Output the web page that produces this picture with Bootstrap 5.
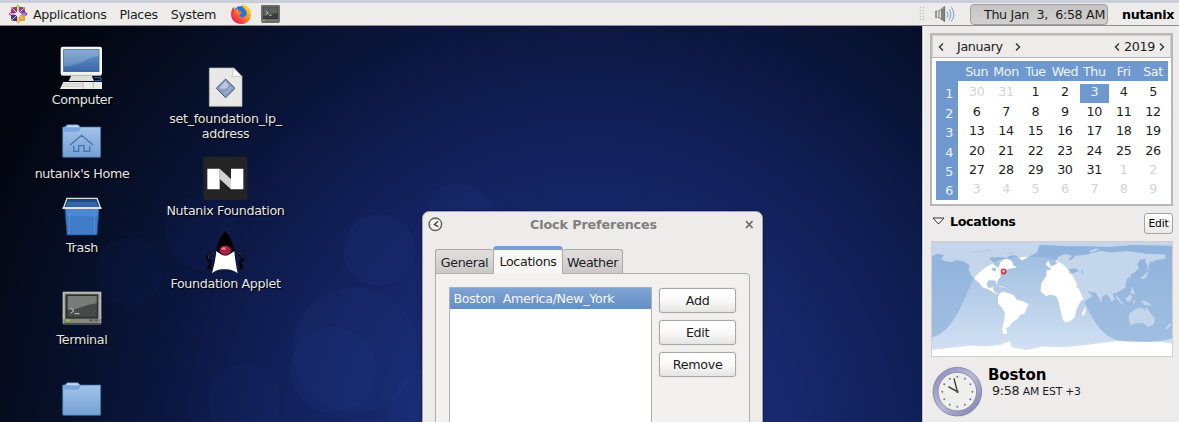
<!DOCTYPE html>
<html lang="en">
<head>
<meta charset="utf-8">
<title>Desktop</title>
<link href="https://cdn.jsdelivr.net/npm/bootstrap@5.3.0/dist/css/bootstrap.min.css" rel="stylesheet">
<style>
html,body{height:422px;overflow:hidden}
body{font-family:"DejaVu Sans",sans-serif;font-size:12.7px;letter-spacing:-.34px;line-height:15px;color:#1c1c1c;background:#edeceb}
.topbar{height:26px;border-top:3px solid #c9ced8;border-bottom:1px solid #8f8f8f;background:#edeceb;padding-left:8px;white-space:pre}
.topbar svg{display:block;flex:none}
.menus{gap:13px;margin:0 15px 0 5px}
.launchers{gap:10px}
.grip{width:6px;height:16px;background:radial-gradient(circle,#bdbdbb .5px,transparent 1.1px) 0 0/3px 3px;margin-right:10px}
.clockbtn{width:138px;height:21px;border:1px solid #a09e9c;border-radius:4px;background:linear-gradient(#c5c4c2,#d2d1cf);padding:1px 2px 0 0;margin-left:15px}
.username{width:71px;padding-right:5px}
.desk{height:396px}
.canvas{width:922px;background:radial-gradient(circle at 590px 420px,#192c77 0,#182a72 170px,#122059 320px,#0b163f 430px,#071029 530px,#03060f 660px)}
.wall{left:0;top:0}
.shortcut{color:#e6e6e6;text-shadow:1px 1px 1px #000;width:130px;white-space:nowrap}
.shortcut svg{display:block;overflow:visible}
.c1{left:17px}.c2{left:160.5px}
.y1{top:14px}.y2{top:94px}.y3{top:168px}.y4{top:261px}.y5{top:352px}
.z1{top:39px}.z2{top:130px}.z3{top:203px}
.y1 span{margin-top:2px}.y2 span{margin-top:1px}.y3 span,.y4 span,.z2 span{margin-top:1px}
.dlg{left:422px;top:185px;width:341px;height:230px;background:#edeceb;border:1px solid #a5a4a2;border-radius:7px 7px 0 0;box-shadow:0 0 2px #0a1030}
.dlgtitle{height:25px;padding:0 7px 0 5px;color:#807f7d;font-weight:bold;letter-spacing:-.1px;margin-bottom:9px}
.tabs{padding-left:12px;height:28px}
.tabx{height:25px;background:linear-gradient(#e2e1df,#c9c8c6);border:1px solid #a9a8a6;border-bottom-color:#b1b0ae;border-radius:3px 3px 0 0;padding-top:2px}
.t1{width:58px;border-right:0}.t3{width:60px;border-left:0}
.tabon{width:70px;height:28px;background:#f7f6f5;border:1px solid #aaa;border-top:4px solid #789fd0;border-bottom:0;z-index:1;border-radius:4px 4px 0 0;padding-bottom:2px}
.page{margin:-1px 12px 0;height:170px;background:#f2f1f0;border:1px solid #b0afad;border-radius:0 4px 0 0;padding:14px 13px 0 12.5px;gap:7px}
.loclist{width:204px;margin-top:-1px;border:1px solid #b3b0ac;background:#fff}
.locrow{height:21px;background:linear-gradient(#7fa4d5,#648ec6);color:#f4f7fb;padding:0 4px;white-space:pre}
.btns{gap:7px;width:77px}
.gbtn{height:25px;border:1px solid #a9a8a6;border-radius:3px;background:linear-gradient(#fff,#f9f9f9 50%,#e5e4e3);box-shadow:0 0 1px #aaa;color:#1c1c1c;font-size:12.7px;letter-spacing:-.3px;padding:0}
.side{width:257px;background:#edeceb;border-left:1px solid #bdbdbf;padding:7px 6px 0 7px;box-shadow:inset 1px 0 #f7f7f7}
.cal{height:173px;border:2px solid #b9b7b5;background:#fff}
.calhead{height:23px;background:#edeceb;border:1px solid #d0cecc;border-bottom:1px solid #b7b5b3;padding:0 5px}
.mname{margin:0 12px 0 13px}
.calgrid{margin:3px 3px 0 4px;display:grid;grid-template-columns:22px 4px repeat(7,29.4px);grid-template-rows:20px 2.5px repeat(6,19.45px)}
.calgrid>*{display:flex;align-items:center;justify-content:center}
.dow{background:#6f99ce;color:#eef3fa;font-size:12.6px}
.rule{grid-column:2/-1}
.wk{background:#6f99ce;color:#eef3fa;padding:1px 0 0 4px}
.day{padding-bottom:3px}
.sel{background:#6f99ce;color:#eef3fa}
.off{color:#d2d2d2}
.mini{width:29px;height:21px;border:1px solid #a6a5a3;border-radius:3px;background:linear-gradient(#fff,#ebeae9);font-size:10.7px;letter-spacing:-.15px;padding:0}
.lochead{margin-top:7px;height:21px;padding-left:2px}
.loctitle{gap:5px;margin-bottom:5px}
.mapbox{width:242px;height:116px;border:1px solid #cfcecc;margin:7px 0 9px 1px}
.face{margin-left:2px}
.cityinfo{margin:1px 0 0 5px}
.city{font-size:15px;letter-spacing:-.1px;line-height:16px}
.ctime{margin-left:4px}
.tz{font-size:10.8px;letter-spacing:-.2px}
</style>
</head>
<body>
<header class="topbar d-flex align-items-center">
<svg width="20" height="20" viewBox="0 0 60 60">
<path d="M30 1l7 8v11H23V9z" fill="#9ccd2a"/><path d="M30 59l-7-8V40h14v11z" fill="#f0ad2e"/><path d="M1 30l8-7h11v14H9z" fill="#b463aa"/><path d="M59 30l-8 7H40V23h11z" fill="#5a3f8f"/>
<path d="M9 9h18v18H9z" fill="#a1308c"/><path d="M33 9h18v18H33z" fill="#8a3e95"/><path d="M9 33h18v18H9z" fill="#433083"/><path d="M33 33h18v18H33z" fill="#eba22c"/>
<path d="M30 6v48M6 30h48M14 14l32 32M46 14L14 46" stroke="#f3f0f0" stroke-width="2.5"/><path d="M9 9l8 1-7 7zM51 9l-8 1 7 7z" fill="#e9a33a"/><path d="M9 51l1-8 7 7zM51 51l-1-8-7 7z" fill="#9ccd2a"/>
</svg>
<div class="menus d-flex"><span>Applications</span><span>Places</span><span>System</span></div>
<div class="launchers d-flex align-items-center">
<svg width="20" height="20" viewBox="0 0 60 60"><defs><linearGradient id="ff" x1=".9" y1=".1" x2=".2" y2=".9"><stop stop-color="#ffe13b"/><stop offset=".45" stop-color="#ff9019"/><stop offset="1" stop-color="#ee1863"/></linearGradient></defs><circle cx="30" cy="30" r="24" fill="#2872dc"/><path d="M32 1c14 0 27 11 28 28 1 18-12 31-29 31C13 60 0 48 0 31 0 22 4 14 8 8l1 9c5-3 9-4 13-2-1 8 5 9 11 9-3 5-8 6-7 11 5 7 15 6 20-2 6-12-10-18-14-32z" fill="url(#ff)"/><path d="M8 8l1 12-5 18c-5-10-2-22 4-30z" fill="#f02d4d"/></svg>
<svg width="19" height="18" viewBox="0 0 57 54"><rect x="1" y="1" width="55" height="49" rx="3" fill="#777b75" stroke="#454844" stroke-width="2"/><rect x="6" y="6" width="45" height="36" fill="#393e3c" stroke="#222"/><path d="M7 7h43v17L7 33z" fill="#5a615d"/><path d="M14 18l7 6-7 6M24 31h8" fill="none" stroke="#eee" stroke-width="2"/><path d="M6 46h6" stroke="#8d3" stroke-width="3"/><path d="M2 52h53" stroke="#555" stroke-width="3"/></svg></div>
<div class="ms-auto d-flex align-items-center"><span class="grip"></span>
<svg width="20" height="19" viewBox="0 0 60 57"><path d="M2 18h10L29 4v46L12 38H2z" fill="#a2a59f" stroke="#666963" stroke-width="2"/><path d="M8 18v20M16 17v22" stroke="#e7e7e4" stroke-width="3"/><path d="M21 13v30M27 7v41" stroke="#5d605b" stroke-width="3"/><path d="M36 20q6 9 0 18M42 13q11 15 0 31M49 7q15 21 0 42" fill="none" stroke="#7699c9" stroke-width="3"/></svg>
<div class="clockbtn d-flex align-items-center justify-content-end">Thu Jan  3,  6:58 AM</div><b class="username text-end text-black">nutanix</b></div>
</header>
<main class="desk d-flex">
<section class="canvas position-relative overflow-hidden flex-shrink-0">
<svg class="wall position-absolute" width="922" height="396" viewBox="0 26 922 396"><g fill="#294ba8" fill-opacity=".09"><circle cx="379" cy="250" r="36"/><circle cx="458" cy="219" r="36"/><circle cx="355" cy="350" r="63"/><circle cx="333" cy="370" r="43"/><circle cx="444" cy="420" r="57"/></g><g fill="#294ba8" fill-opacity=".06"><circle cx="244" cy="400" r="36"/><circle cx="202" cy="233" r="37"/><circle cx="130" cy="271" r="34"/></g></svg>
<div class="shortcut c1 y1 position-absolute d-flex flex-column align-items-center">
<svg width="46" height="50" viewBox="177 120 138 150"><defs><linearGradient id="scr" x1="0" y1="0" x2="0" y2="1"><stop stop-color="#6d97ca"/><stop offset="1" stop-color="#3767a8"/></linearGradient></defs><path d="M215 224h59l8 19h-76z" fill="#ddddd9"/><rect x="182" y="140" width="124" height="86" rx="6" fill="#f4f4f1"/><rect x="191" y="149" width="106" height="66" fill="url(#scr)" stroke="#31588e" stroke-width="2"/><path d="M192 150h104v18c-38 5-50 28-104 31z" fill="#fff" opacity=".19"/><path d="M184 226h120" stroke="#b7b8b2" stroke-width="3"/><path d="M190 246h116v21H180z" fill="#ecece8"/><path d="M188 252h60M186 259h60" stroke="#c8c8c3" stroke-width="3"/><path d="M249 245v22M280 246v20" stroke="#a5a59f" stroke-width="2"/><path d="M283 233h20v9h-19" fill="none" stroke="#3f72ad" stroke-width="3"/></svg><span>Computer</span></div>
<div class="shortcut c1 y2 position-absolute d-flex flex-column align-items-center">
<svg width="40" height="45" viewBox="0 0 120 135"><defs><linearGradient id="fo" x1="0" y1="0" x2="0" y2="1"><stop stop-color="#a6c6eb"/><stop offset="1" stop-color="#74a0d4"/></linearGradient></defs><path id="fold" d="M2 32V22L10 20l5-6h32l8 7h61v89q0 2-3 2H5q-3 0-3-3z" fill="url(#fo)" stroke="#3c6ba9" stroke-width="2"/><path d="M4 35h45l8-12-9-8H16l-6 7-6 2z" fill="#79a5dc"/><path d="M12 22l6-6h29l5 6z" fill="#c2d8f1"/><path d="M24 75l35-29 34 29M35 77v17h15V77h16v17h17V77" fill="none" stroke="#4574ae" stroke-width="4"/></svg><span>nutanix's Home</span></div>
<div class="shortcut c1 y3 position-absolute d-flex flex-column align-items-center">
<svg width="40" height="45" viewBox="0 0 120 135"><path d="M8 34h104l-7 89H15z" fill="#3f7bc6" stroke="#1d4b91" stroke-width="2"/><path d="M12 37h96v30H15z" fill="#5994db" opacity=".5"/><path d="M22 60v61M97 50v70" stroke="#609adb" stroke-width="2"/><path d="M15 13h90l11 30H4z" fill="#1d4482" stroke="#dfe0dc" stroke-width="4"/><path d="M17 23h85l7 15H11z" fill="#3468ae"/><path d="M2 42h116" stroke="#e4e4df" stroke-width="6"/></svg><span>Trash</span></div>
<div class="shortcut c1 y4 position-absolute d-flex flex-column align-items-center">
<svg width="40" height="44" viewBox="184 20 120 132"><path d="M186 34h116v94l-4 6H190l-4-6z" fill="#999a94"/><path d="M188 36h112v91H188z" fill="#a8a9a2" stroke="#d0d1ca" stroke-width="2"/><path d="M194 42h99v73h-99z" fill="#30332f"/><rect x="201" y="47" width="87" height="62" fill="#464b49"/><path d="M201 47h87v22c-39 5-46 17-87 20z" fill="#767d79"/><path d="M210 83l10 8-10 8M222 100h14" fill="none" stroke="#ededed" stroke-width="2.5"/><path d="M188 116h112v12H188z" fill="#85867f"/><path d="M196 120h11" stroke="#83db2c" stroke-width="5"/><path d="M266 120h10M282 120h9" stroke="#555" stroke-width="5"/><path d="M190 131h108" stroke="#4c4d49" stroke-width="6"/></svg><span>Terminal</span></div>
<div class="shortcut c1 y5 position-absolute d-flex flex-column align-items-center">
<svg width="40" height="45" viewBox="0 0 120 135"><use href="#fold"/><path d="M4 35h45l8-12-9-8H16l-6 7-6 2z" fill="#79a5dc"/><path d="M12 22l6-6h29l5 6z" fill="#c2d8f1"/></svg></div>
<div class="shortcut c2 z1 position-absolute d-flex flex-column align-items-center text-center">
<svg width="34" height="46" viewBox="626 194 102 138"><path d="M627 203h72l26 26v89h-98z" fill="#e8e9e6" stroke="#bbbcb8" stroke-width="2"/><path d="M700 202q-2 22-6 28 14-5 32 0z" fill="#f8f8f7" stroke="#b5b6b2" stroke-width="2"/><path d="M676 236l28 28-28 28-28-28z" fill="#8c9bc2" stroke="#4a5470" stroke-width="3"/><path d="M657 263l18-21 10 12q-6 18-28 9z" fill="#bbc6df"/><path d="M670 280q14-3 22-20" stroke="#b6bfdb" stroke-width="3" fill="none"/></svg><span>set_foundation_ip_<br>address</span></div>
<div class="shortcut c2 z2 position-absolute d-flex flex-column align-items-center">
<svg width="44" height="46" viewBox="2 0 132 138"><rect y="2" width="132" height="130" rx="7" fill="#242424"/><path d="M12 38h37v62H12zM83 38h37v62H83z" fill="#fff"/><path d="M49 38l34 31v31L49 69z" fill="#d2d2d2"/></svg><span>Nutanix Foundation</span></div>
<div class="shortcut c2 z3 position-absolute d-flex flex-column align-items-center">
<svg width="42" height="47" viewBox="616 88 126 141"><path d="M640 161q-18 5-16 17 9 3 8 17l-6 7 8 6M715 163q17 5 14 17-9 4-7 14l6 7-7 7" fill="none" stroke="#000" stroke-width="7"/><path d="M641 160q-16 5-15 17M716 160q14 5 13 15" fill="none" stroke="#bbb" stroke-width="1"/><path d="M676 94Q653 125 649 155L637 221Q654 206 674 209 694 209 714 221L705 155Q699 120 676 94z" fill="#000"/><path d="M650 154q26 24 54 0 2 26 10 67-18-13-39-12-20-3-38 12 10-35 13-67z" fill="#fff"/><ellipse cx="677" cy="152" rx="18" ry="15" fill="#a91f45" stroke="#000" stroke-width="2"/><ellipse cx="672" cy="147" rx="7" ry="4" fill="#e77591"/></svg><span>Foundation Applet</span></div>

<div class="dlg position-absolute">
<div class="dlgtitle d-flex align-items-center justify-content-between"><svg width="15" height="15" viewBox="0 0 45 45"><circle cx="22" cy="22" r="19" fill="#f4f4f2" stroke="#5e605c" stroke-width="4"/><path d="M30 13L19 23l12 6" fill="none" stroke="#444" stroke-width="4"/><path d="M22 7v3M22 35v3M7 22h3M35 22h3" stroke="#777" stroke-width="2"/></svg><span>Clock Preferences</span><svg width="11" height="11" viewBox="0 0 11 11"><path d="M2 2l6.5 7M8.500 2L2 9" stroke="#6a6a68" stroke-width="1.8"/></svg></div>
<div class="tabs d-flex align-items-end"><div class="tabx t1 d-flex align-items-center justify-content-center">General</div><div class="tabon d-flex align-items-center justify-content-center">Locations</div><div class="tabx t3 d-flex align-items-center justify-content-center">Weather</div></div>
<div class="page d-flex"><div class="loclist"><div class="locrow d-flex align-items-center">Boston  America/New_York</div></div>
<div class="btns d-flex flex-column"><button class="gbtn">Add</button><button class="gbtn">Edit</button><button class="gbtn">Remove</button></div></div>
</div>
</section>
<aside class="side">
<div class="cal"><div class="calhead d-flex align-items-center"><svg width="6" height="10" viewBox="0 0 6 10"><path id="prev" d="M5 1.500L1.500 5 5 8.500" fill="none" stroke="#333" stroke-width="1.400"/></svg><span class="mname">January</span><svg width="6" height="10" viewBox="0 0 6 10"><path id="next" d="M1 1.500L4.500 5 1 8.500" fill="none" stroke="#333" stroke-width="1.400"/></svg><svg class="ms-auto" width="6" height="10" viewBox="0 0 6 10"><use href="#prev"/></svg><span class="mx-1">2019</span><svg width="6" height="10" viewBox="0 0 6 10"><use href="#next"/></svg></div>
<div class="calgrid" id="cal"></div></div>
<div class="lochead d-flex align-items-end justify-content-between"><div class="loctitle d-flex align-items-center"><svg width="13" height="9" viewBox="0 0 13 9"><path d="M1 1h11L6.500 7z" fill="#f8f8f8" stroke="#333"/></svg><b class="text-black">Locations</b></div><button class="mini">Edit</button></div>
<div class="mapbox"><svg class="d-block" width="240" height="114" viewBox="35 23 720 340" preserveAspectRatio="none">
<defs><linearGradient id="sea" x1="0" y1="0" x2="0" y2="1"><stop stop-color="#9abadf"/><stop offset="1" stop-color="#d5e3f3"/></linearGradient><linearGradient id="ns" x1="0" y1="0" x2="0" y2="1"><stop stop-color="#8fb2dc"/><stop offset="1" stop-color="#a3c0e1"/></linearGradient>
<clipPath id="day"><path d="M35 308C95 290 117 226 160 132 190 96 235 66 330 66 390 68 430 72 462 132 500 215 530 312 605 318 680 326 730 318 755 310V363H35z"/></clipPath>
<g id="land">
<path d="M35 23H755V34L640 32 560 38 505 36 445 36 390 33 357 32 350 55 326 66 305 78 292 66 280 62 262 66 262 74 275 80 278 92 290 98 262 104 250 110 240 118 241 126 232 138 230 152 225 138 205 137 198 150 205 160 217 158 220 153 218 164 224 173 236 177 228 178 205 165 186 158 178 147 163 133 152 122 145 104 148 92 132 82 110 77 95 83 72 80 62 72 72 62 50 58 35 66z"/>
<path d="M237 177L248 171 264 176 280 181 290 196 308 200 325 209 317 225 312 237 300 240 290 254 278 260 268 274 258 280 260 298 248 297 245 284 252 254 254 235 247 223 234 207 232 190z"/>
<path d="M378 124l28-2 22 10 30 2 10 22 12 26 9 4-19 34-8 30-15 11-14 1-8-14-6-28-5-22-7-14-16-4-14 4-16-14 1-22z"/>
<path d="M484 240l10-24 3 10-7 18z"/>
<path d="M378 121l1-14 14-2-8-10 17-3 10-6-7-5 10-15 22-7 18 6-12 13 12-3 10-11 35-4 38-10 35 4 50-4 55 8 57 2v14l-25 2-12 6-10-1-2 14-10-10-2-12-15 4-8 12 4 12-15 15-10 2 2 14-8-6-8 20 0 12-22 14-18 6 8 16-10 8-8-16-8-8-12 8-4 18-8-18-8-12-15-2-12-5 18 17-22 15-9-3-14-20-3-9 4-12-22 2-4-8-7-3 4 12-15-16-8 0-10 8z"/>
<path d="M376 90l8-12 6 14-4 8zM588 182l22 26-4 2-18-20zM616 192l14-14 6 10-8 14-8-2zM636 200l10-6-4 14zM661 196l22 6 12 12-24-4zM630 174l6-18 8 24zM659 128l8-2 16-16-3 16-12 8zM680 83l6 18-3 9zM505 50l25-8 5 3-24 10z"/>
<path d="M626 238l18-14 15-6 10 4 3 5 6-11 10 16 16 19-4 17-16 10-14-12-18-2-22 8-5-16zM736 279l15-16 1 9-14 12z"/>
<path d="M229 153l14 2 16 5-18-3z"/>
<path d="M35 344l50-5 30-3 40-4 40 3 45-5 28-11 6 18 44 8 50-10 60 2 60-6 50-6 55-7 70 2 60 1 32 5v40H35z"/>
</g></defs>
<rect x="35" y="23" width="720" height="340" fill="url(#ns)"/><use href="#land" fill="#c3d6eb"/><g fill="#94b5db"><path d="M205 70l30-2 30 3-8 6-22 0-6 20-12-15zM446 104l20-3 9 9-22 7zM484 102l5 16-6-3zM216 101l12 3-5 8z"/></g><path d="M150 55l60-8M255 58l28-2" stroke="#a7c3e2" stroke-width="2"/>
<g clip-path="url(#day)"><rect x="35" y="23" width="720" height="340" fill="url(#sea)"/><use href="#land" fill="#fff"/><path d="M213 102l15-3-3 12-9-3zM205 60h45l-3 18-8 6-3 16-16-10zM442 103h20v14h-14z" fill="#a5c3e3"/></g>
<circle cx="250" cy="111" r="9" fill="#c83f4d"/><circle cx="250" cy="110" r="4" fill="#f3aab0"/></svg></div>
<div class="d-flex"><svg class="face" width="51" height="52" viewBox="37 46 153 156"><defs><linearGradient id="rim" x1="0" y1="0" x2="1" y2="1"><stop stop-color="#8587b5"/><stop offset=".5" stop-color="#b9bada"/><stop offset="1" stop-color="#7679a8"/></linearGradient></defs><circle cx="113" cy="123" r="73" fill="url(#rim)" stroke="#72749a" stroke-width="2"/><circle cx="113" cy="123" r="58" fill="#efefeb" stroke="#8a8bab" stroke-width="3"/><g id="ticks" fill="#777"></g><path d="M86 108l27 15-10-40" fill="none" stroke="#333" stroke-width="4"/><circle cx="113" cy="123" r="4" fill="#555"/></svg>
<div class="cityinfo"><b class="city text-black d-block">Boston</b><span class="ctime">9:58 <span class="tz">AM EST +3</span></span></div></div>
</aside>
</main>
<script src="https://cdn.jsdelivr.net/npm/bootstrap@5.3.0/dist/js/bootstrap.bundle.min.js"></script>
<script>
// Month grid for January 2019, with the neighbouring months' days dimmed
let h='<span class="dow"></span><span class="dow"></span>'+'Sun Mon Tue Wed Thu Fri Sat'.split(' ').map(d=>`<span class="dow">${d}</span>`).join('')+'<span class="wk"></span><span class="rule"></span>';
for(let w=0;w<6;w++){
  h+=`<span class="wk">${w+1}</span><span></span>`;
  for(let d=0;d<7;d++){const n=w*7+d-1,v=n<1?n+31:n>31?n-31:n;h+=`<span class="day ${n<1||n>31?'off':n===3?'sel':''}">${v}</span>`;}
}
document.getElementById('cal').innerHTML=h;
document.getElementById('ticks').innerHTML=[...Array(12)].map((_,i)=>`<circle cx="${113+45*Math.sin(i*Math.PI/6)}" cy="${123-45*Math.cos(i*Math.PI/6)}" r="3"/>`).join('');
</script>
</body>
</html>
